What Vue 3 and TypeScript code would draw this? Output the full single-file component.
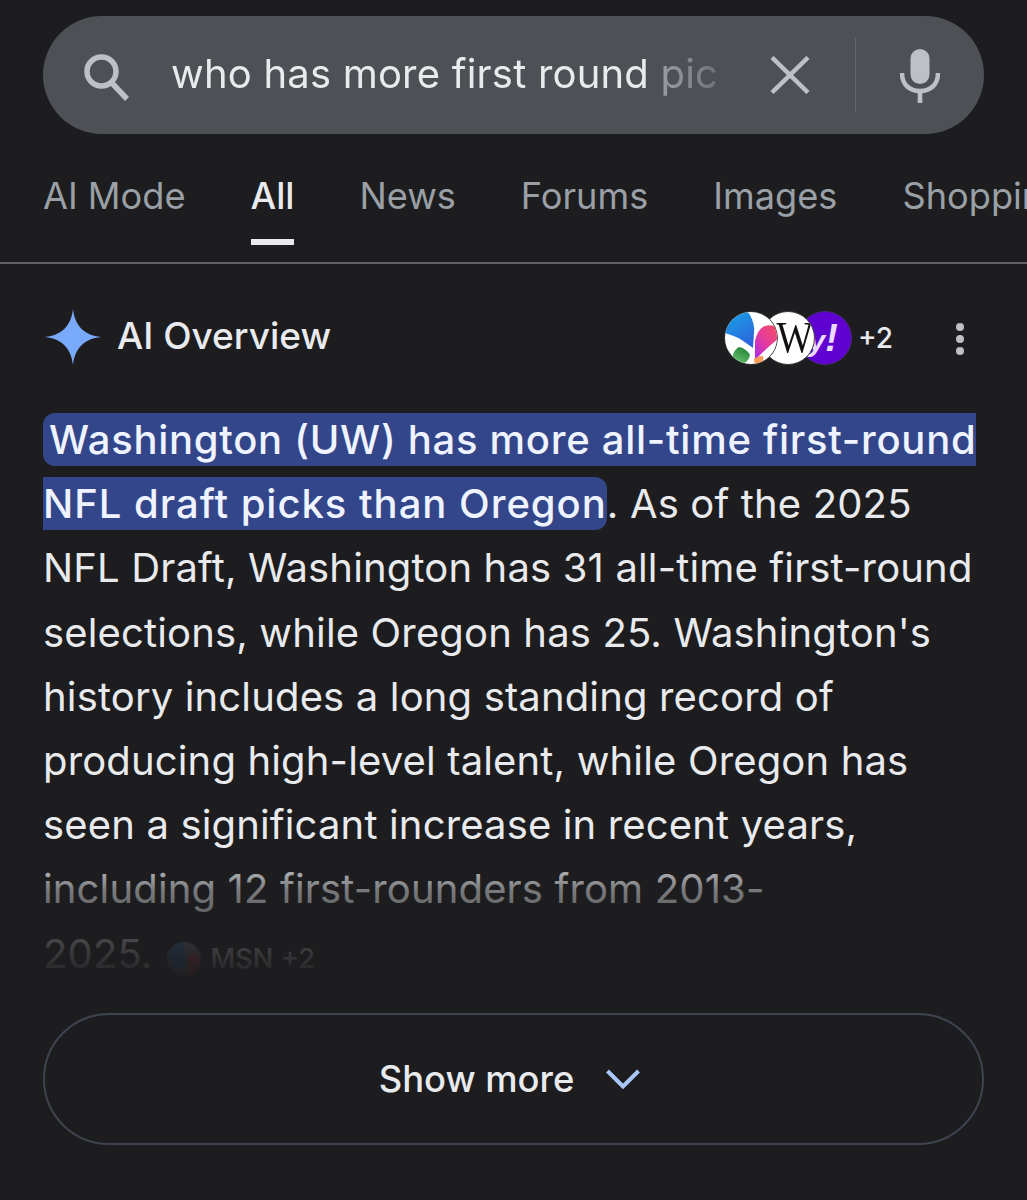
<script setup lang="ts">
const tabs: string[] = ['AI Mode', 'All', 'News', 'Forums', 'Images', 'Shopping']
</script>

<template>
  <div class="page">
    <div class="search">
      <svg class="s-icon" width="50" height="50" viewBox="0 0 50 50" fill="none" stroke="#bdc1c6">
        <circle cx="19.5" cy="19.5" r="14.5" stroke-width="5.5" />
        <path d="M29 30 L45 47" stroke-width="5.5" />
      </svg>
      <div class="query">who has more first round picks</div>
      <svg class="clear" width="40" height="38" viewBox="0 0 40 38" stroke="#bdc1c6" stroke-width="4.5" fill="none">
        <path d="M2 1.5 L38 36.5 M38 1.5 L2 36.5" />
      </svg>
      <div class="divider"></div>
      <svg class="mic" width="40" height="54" viewBox="0 0 40 54" fill="#bdc1c6">
        <rect x="10.5" y="0" width="19" height="35" rx="9.5" />
        <path d="M2 24 C2 36 10 42 20 42 C30 42 38 36 38 24" fill="none" stroke="#bdc1c6" stroke-width="4.5" />
        <rect x="17.7" y="41" width="4.6" height="13" />
      </svg>
    </div>

    <nav class="tabs">
      <div v-for="t in tabs" :key="t" class="tab" :class="{ active: t === 'All' }">{{ t }}</div>
    </nav>

    <section class="overview">
      <header class="head">
        <svg class="spark" width="56" height="56" viewBox="0 0 56 56">
          <path d="M28 0 C30 17 39 26 56 28 C39 30 30 39 28 56 C26 39 17 30 0 28 C17 26 26 17 28 0 Z" fill="#78a9fa" />
        </svg>
        <h2 class="title">AI Overview</h2>
        <div class="sources">
          <svg class="fav f1" width="54" height="54" viewBox="0 0 54 54">
            <defs>
              <clipPath id="c1"><circle cx="27" cy="27" r="26" /></clipPath>
              <filter id="soft"><feGaussianBlur stdDeviation="0.7" /></filter>
              <linearGradient id="gb" x1="0.2" y1="0" x2="0.7" y2="1">
                <stop offset="0" stop-color="#16a3e6" />
                <stop offset="1" stop-color="#2f62dc" />
              </linearGradient>
              <linearGradient id="gp" x1="1" y1="0" x2="0" y2="1">
                <stop offset="0" stop-color="#f4505f" />
                <stop offset="0.55" stop-color="#e43aa0" />
                <stop offset="1" stop-color="#a52be6" />
              </linearGradient>
              <linearGradient id="gg" x1="0.8" y1="0" x2="0.2" y2="1">
                <stop offset="0" stop-color="#1f7f3a" />
                <stop offset="1" stop-color="#6cc46e" />
              </linearGradient>
            </defs>
            <circle cx="27" cy="27" r="27" fill="#3a3a3c" />
            <circle cx="27" cy="27" r="26" fill="#fff" />
            <g clip-path="url(#c1)">
              <g filter="url(#soft)">
                <path d="M0 17 C4 8 10 2 15 0 C20 -1 24 0 26 4 C29 10 31 16 30 22 L29 37 C22 32 17 28 12 26 C8 24 4 23 0 22 Z" fill="url(#gb)" />
                <path d="M31 30 C33 22 36 17 41 15 C46 13 52 15 55 19 L54 28 C48 33 43 37 38 42 C36 44 33 47 31 48 Z" fill="url(#gp)" />
                <path d="M8 48 C9 42 11 38 15 36 C20 37 24 40 26 44 C25 48 23 51 20 52 H13 Z" fill="url(#gg)" />
                <path d="M30 48 C32 46 36 45 39 45 C40 49 38 53 33 55 C31 53 30 51 30 48 Z" fill="#f79a55" />
              </g>
            </g>
          </svg>
          <div class="fav f2"><span class="wk">W</span></div>
          <div class="fav f3"><span class="yh">y</span><span class="yb">!</span></div>
          <span class="more">+2</span>
        </div>
        <svg class="dots" width="12" height="36" viewBox="0 0 12 36" fill="#bdc1c6">
          <circle cx="6" cy="6" r="4" />
          <circle cx="6" cy="18" r="4" />
          <circle cx="6" cy="30" r="4" />
        </svg>
      </header>

      <div class="body">
        <p class="text">
          <mark class="hl">Washington (UW) has more all-time first-round<br /><span class="hl-two">NFL draft picks than Oregon</span></mark>. As of the 2025<br />
          NFL Draft, Washington has 31 all-time first-round<br />
          selections, while Oregon has 25. Washington's<br />
          history includes a long standing record of<br />
          producing high-level talent, while Oregon has<br />
          seen a significant increase in recent years,<br />
          including 12 first-rounders from 2013-<br />
          2025.<span class="cite"><svg class="cite-icon" width="34" height="34" viewBox="0 0 34 34">
            <circle cx="17" cy="17" r="17" fill="#77787a" />
            <path d="M2 12 C6 2 14 0 17 0 L19 20 L12 30 C6 26 2 20 2 12 Z" fill="#2c6db5" />
            <path d="M20 14 C26 10 32 12 34 18 C32 26 28 32 22 34 Z" fill="#c8384a" />
          </svg><span class="cite-name">MSN</span><span class="cite-more">+2</span></span>
        </p>
        <div class="fade"></div>
      </div>

      <button class="show" type="button">
        <span>Show more</span>
        <svg width="34" height="20" viewBox="0 0 34 20" fill="none" stroke="#a8c7fa" stroke-width="4">
          <path d="M1.5 2 L17 17.5 L32.5 2" />
        </svg>
      </button>
    </section>
  </div>
</template>

<style scoped>
.page {
  width: 1027px;
  height: 1200px;
  overflow: hidden;
  background: #1d1d1f;
  box-sizing: border-box;
  padding-top: 16px;
  font-family: Inter, "Liberation Sans", sans-serif;
}
.search {
  margin: 0 43px;
  height: 118px;
  border-radius: 59px;
  background: #4d5156;
  display: flex;
  align-items: center;
  box-sizing: border-box;
  padding-left: 39px;
}
.s-icon { flex: none; margin-top: 3px; }
.query {
  margin-left: 39px;
  margin-bottom: 4px;
  width: 548px;
  flex: none;
  overflow: hidden;
  white-space: nowrap;
  font-size: 40px;
  letter-spacing: 0.2px;
  color: #e8eaed;
  -webkit-mask-image: linear-gradient(to right, #000 87%, rgba(0,0,0,.5) 89%, rgba(0,0,0,.25) 99%, rgba(0,0,0,0) 100%);
  mask-image: linear-gradient(to right, #000 87%, rgba(0,0,0,.5) 89%, rgba(0,0,0,.25) 99%, rgba(0,0,0,0) 100%);
}
.clear { flex: none; margin-left: 51px; }
.divider {
  flex: none;
  width: 1px;
  height: 74px;
  margin-left: 45px;
  background: #64686d;
}
.mic { flex: none; margin-left: 44px; margin-top: 1px; }
.tabs {
  display: flex;
  gap: 65px;
  height: 130px;
  padding-left: 43px;
  box-sizing: border-box;
  border-bottom: 2px solid #5f6368;
  overflow: hidden;
  white-space: nowrap;
  font-size: 36.2px;
  color: #9aa0a6;
}
.tab {
  flex: none;
  height: 87px;
  margin-top: 24px;
  padding-top: 16px;
  box-sizing: border-box;
  line-height: 44px;
}
.tab.active {
  color: #e8eaed;
  border-bottom: 6px solid #e8eaed;
  font-weight: 500;
}
.overview { padding: 0 43px; }
.head {
  display: flex;
  align-items: center;
  height: 56px;
  margin-top: 45px;
}
.spark { flex: none; margin-left: 2px; }
.title {
  margin: 0 0 4px 16px;
  flex: none;
  font-size: 37px;
  font-weight: 500;
  color: #e8eaed;
}
.sources {
  margin-left: auto;
  display: flex;
  align-items: center;
  margin-top: 2px;
}
.fav {
  flex: none;
  width: 54px;
  height: 54px;
  border-radius: 50%;
  display: flex;
  align-items: center;
  justify-content: center;
  overflow: hidden;
  box-sizing: border-box;
  position: relative;
}
.f1 { z-index: 3; }
.f2 {
  z-index: 2;
  margin-left: -17px;
  background: #fff;
  border: 1px solid #3a3a3c;
}
.f3 {
  z-index: 1;
  margin-left: -17px;
  background: #5f01d1;
  border: 1px solid #4a2a78;
  justify-content: flex-end;
  align-items: baseline;
  padding-right: 13px;
}
.wk {
  display: inline-block;
  font-family: "Liberation Serif", serif;
  font-size: 44px;
  line-height: 1;
  color: #111;
  margin-left: 14px;
  transform: scaleX(0.88);
}
.yh {
  font-family: "Liberation Sans", sans-serif;
  font-size: 30px;
  line-height: 52px;
  font-style: italic;
  font-weight: 700;
  color: #eadcff;
}
.yb {
  font-family: "Liberation Sans", sans-serif;
  font-size: 38px;
  line-height: 52px;
  font-style: italic;
  font-weight: 700;
  color: #eadcff;
}
.more {
  margin-left: 6px;
  font-size: 28px;
  font-weight: 500;
  color: #e8eaed;
}
.dots { flex: none; margin-left: 61px; margin-right: 18px; margin-top: 4px; }
.body { position: relative; margin-top: 43px; }
.text {
  margin: 0;
  font-size: 40px;
  line-height: 64.2px;
  letter-spacing: 0.15px;
  color: #e8eaed;
  white-space: nowrap;
}
.hl {
  background: #33468a;
  color: #eef3ff;
  font-weight: 500;
  letter-spacing: 0.72px;
  padding: 2px 0 2px 6px;
  -webkit-box-decoration-break: slice;
  box-decoration-break: slice;
  border-radius: 12px;
}
.hl-two { letter-spacing: 0.98px; }
.cite {
  display: inline-flex;
  align-items: center;
  vertical-align: -8px;
  margin-left: 14px;
  font-size: 27px;
  line-height: 34px;
  font-weight: 500;
  letter-spacing: 0;
}
.cite-icon { flex: none; }
.cite-name { margin-left: 10px; }
.cite-more { margin-left: 8px; }
.fade {
  position: absolute;
  left: -10px;
  right: -10px;
  top: 442px;
  height: 135px;
  background: linear-gradient(to bottom, rgba(29,29,31,0), rgba(29,29,31,.55) 30%, rgba(29,29,31,.88) 78%, #1d1d1f 100%);
}
.show {
  display: flex;
  align-items: center;
  justify-content: center;
  gap: 32px;
  width: 941px;
  height: 132px;
  margin-top: 27px;
  padding: 0 8px 0 0;
  border: 2px solid #3e4350;
  border-radius: 66px;
  background: transparent;
  color: #e8eaed;
  font-family: Inter, sans-serif;
  font-size: 36.4px;
  font-weight: 500;
  box-sizing: border-box;
}
</style>
